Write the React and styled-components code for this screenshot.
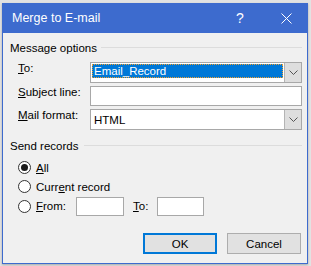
import React from "react";
import styled, { createGlobalStyle } from "styled-components";

const GlobalStyle = createGlobalStyle`
  html, body { margin: 0; padding: 0; background: #e2e2e2; }
  body { font-family: "Liberation Sans", Arial, sans-serif; }
  * { box-sizing: border-box; }
`;

const Page = styled.div`
  padding: 3px 0 0 2px;
  height: 266px;
`;

const Window = styled.div`
  width: 306px;
  height: 261px;
  border: 1px solid #3d6bce;
  border-top: 0;
  background: #f0f0f0;
  display: flex;
  flex-direction: column;
  box-shadow: 0 1px 2px rgba(0, 0, 0, 0.25);
`;

const TitleBar = styled.div`
  height: 30px;
  background: #3d6bce;
  display: flex;
  align-items: center;
  color: #fff;
  margin: 0 -1px 0 -1px;
  padding-left: 10px;
`;

const Title = styled.div`
  flex: 1;
  font-size: 12.5px;
`;

const TitleButton = styled.div`
  width: ${(p) => p.$w}px;
  height: 30px;
  display: flex;
  align-items: center;
  justify-content: center;
  font-size: 14px;
`;

const Content = styled.div`
  flex: 1;
  display: flex;
  flex-direction: column;
  padding: 8px 5px 9px 7px;
  font-size: 11.5px;
  color: #000;
`;

const GroupHeader = styled.div`
  display: flex;
  align-items: center;
  gap: ${(p) => p.$gap}px;
  height: 14px;
  line-height: 14px;
  margin-top: ${(p) => p.$top || 0}px;
`;

const GroupLine = styled.div`
  flex: 1;
  border-top: 1px solid #dcdcdc;
  margin-top: -1px;
`;

const FormGrid = styled.div`
  display: grid;
  grid-template-columns: 72px 1fr;
  grid-template-rows: 21px 20px 21px;
  row-gap: 3px;
  margin-top: 7px;
  padding-left: 8px;
`;

const FieldLabel = styled.div`
  line-height: 14px;
  margin-top: -1px;
  white-space: nowrap;
`;

const U = styled.span`
  text-decoration: underline;
  text-underline-offset: 1px;
`;

const Combo = styled.div`
  display: flex;
  border: 1px solid #a8a8a8;
  background: #fff;
  height: 100%;
`;

const ComboValue = styled.div`
  flex: 1;
  display: flex;
  align-items: ${(p) => (p.$selected ? "flex-start" : "center")};
  padding-left: ${(p) => (p.$selected ? 1 : 3)}px;
  padding-right: 1px;
  padding-top: ${(p) => (p.$selected ? 1 : 0)}px;
`;

const Highlight = styled.div`
  flex: 1;
  height: 14px;
  line-height: 14px;
  background: #0078d7;
  color: #fff;
  padding-left: 2px;
  outline: 1px dotted #f0a030;
  outline-offset: -1px;
`;

const DropButton = styled.div`
  width: 17px;
  background: #dedede;
  border-left: 1px solid #b4b4b4;
  display: flex;
  align-items: center;
  justify-content: center;
`;

const TextBox = styled.div`
  border: 1px solid #a8a8a8;
  background: #fff;
  height: ${(p) => p.$h || 20}px;
  width: ${(p) => (p.$w ? `${p.$w}px` : "auto")};
`;

const RadioList = styled.div`
  display: grid;
  grid-template-rows: 19px 19px 20px;
  margin-top: 5px;
  padding-left: 8px;
`;

const RadioRow = styled.div`
  display: flex;
  align-items: center;
  gap: 5px;
`;

const Radio = styled.div`
  width: 13px;
  height: 13px;
  border-radius: 50%;
  border: 1px solid #333;
  background: #fff;
  display: flex;
  align-items: center;
  justify-content: center;
  &::after {
    content: "";
    width: 7px;
    height: 7px;
    border-radius: 50%;
    background: ${(p) => (p.$checked ? "#1a1a1a" : "transparent")};
  }
`;

const InlineLabel = styled.div`
  width: ${(p) => (p.$w ? `${p.$w}px` : "auto")};
  margin-left: ${(p) => p.$ml || 0}px;
  white-space: nowrap;
`;

const ButtonRow = styled.div`
  margin-top: auto;
  display: flex;
  justify-content: flex-end;
  gap: 10px;
  padding-right: 1px;
`;

const Button = styled.div`
  width: 74px;
  height: 21px;
  background: #e1e1e1;
  border: ${(p) => (p.$default ? "2px solid #0078d7" : "1px solid #adadad")};
  display: flex;
  align-items: center;
  justify-content: center;
`;

const Chevron = () => (
  <svg width="9" height="5" viewBox="0 0 9 5">
    <polyline points="0.5,0.5 4.5,4.5 8.5,0.5" fill="none" stroke="#555" strokeWidth="1" />
  </svg>
);

export default function App() {
  return (
    <>
      <GlobalStyle />
      <Page>
        <Window>
          <TitleBar>
            <Title>Merge to E-mail</Title>
            <TitleButton $w={48}>?</TitleButton>
            <TitleButton $w={44}>
              <svg width="11" height="11" viewBox="0 0 11 11">
                <path d="M0.5 0.5 L10.5 10.5 M10.5 0.5 L0.5 10.5" stroke="#fff" strokeWidth="1" />
              </svg>
            </TitleButton>
          </TitleBar>
          <Content>
            <GroupHeader $gap={4}>
              <span>Message options</span>
              <GroupLine />
            </GroupHeader>
            <FormGrid>
              <FieldLabel>
                <U>T</U>o:
              </FieldLabel>
              <Combo>
                <ComboValue $selected>
                  <Highlight>Email_Record</Highlight>
                </ComboValue>
                <DropButton>
                  <Chevron />
                </DropButton>
              </Combo>
              <FieldLabel>
                <U>S</U>ubject line:
              </FieldLabel>
              <TextBox />
              <FieldLabel>
                <U>M</U>ail format:
              </FieldLabel>
              <Combo>
                <ComboValue>HTML</ComboValue>
                <DropButton>
                  <Chevron />
                </DropButton>
              </Combo>
            </FormGrid>
            <GroupHeader $gap={6} $top={9}>
              <span>Send records</span>
              <GroupLine />
            </GroupHeader>
            <RadioList>
              <RadioRow>
                <Radio $checked />
                <InlineLabel>
                  <U>A</U>ll
                </InlineLabel>
              </RadioRow>
              <RadioRow>
                <Radio />
                <InlineLabel>
                  Curr<U>e</U>nt record
                </InlineLabel>
              </RadioRow>
              <RadioRow>
                <Radio />
                <InlineLabel $w={35}>
                  <U>F</U>rom:
                </InlineLabel>
                <TextBox $w={48} $h={19} />
                <InlineLabel $w={19} $ml={4}>
                  <U>T</U>o:
                </InlineLabel>
                <TextBox $w={47} $h={19} />
              </RadioRow>
            </RadioList>
            <ButtonRow>
              <Button $default>OK</Button>
              <Button>Cancel</Button>
            </ButtonRow>
          </Content>
        </Window>
      </Page>
    </>
  );
}
